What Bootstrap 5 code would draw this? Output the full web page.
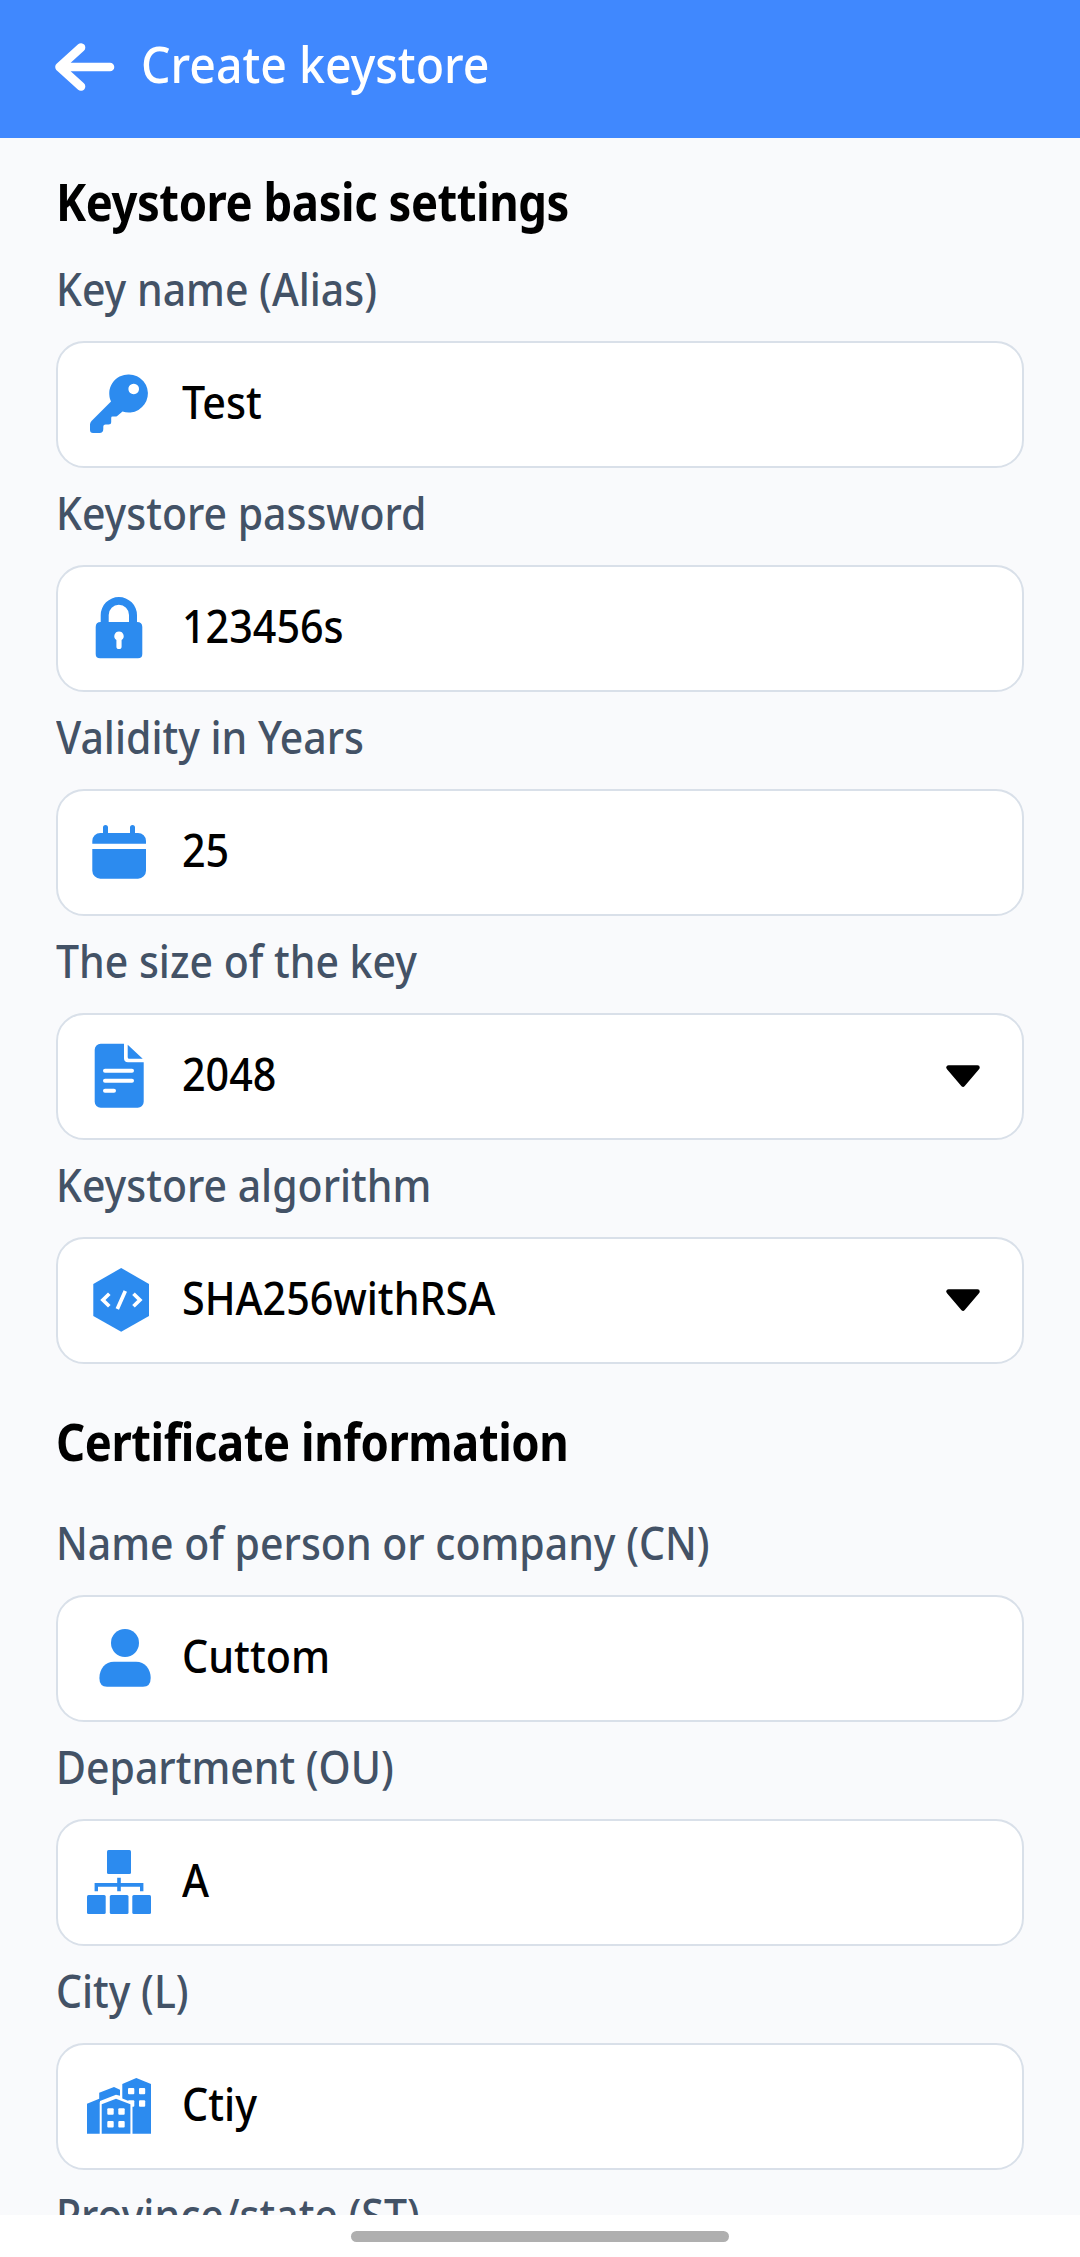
<!DOCTYPE html>
<html lang="en">
<head>
<meta charset="utf-8">
<meta name="viewport" content="width=device-width, initial-scale=1">
<title>Create keystore</title>
<link href="https://cdn.jsdelivr.net/npm/bootstrap@5.3.0/dist/css/bootstrap.min.css" rel="stylesheet">
<style>
body{font-family:"Noto Sans","Open Sans",sans-serif;font-size:45px;font-weight:500;color:#000;background:#f9fafc}
.app-screen{height:2257px}
.app-top{height:137.5px;background:#4088fe;padding-left:54px;color:#fff}
.back-arrow{margin-top:42px}
.app-title{font-size:51px;line-height:126px;margin-left:25px;font-weight:500}
.app-body{padding:0 56px;min-height:0}
.sec-title{font-size:52.5px;font-weight:700;line-height:125px;height:106.5px;margin:0;letter-spacing:-.5px}
.sec-title.second{height:134px;line-height:153px}
.sec-title .sx{transform:scaleX(.865)}
.fld-label{display:block;height:97px;line-height:89px;color:#435266;white-space:nowrap}
.fld-box{height:127px;border:2px solid #d9e0e9;border-radius:28px;background:#fff;padding:0 41px 0 29px}
.fld-box svg.ico{width:64px;height:64px;margin-top:29px;fill:#2c8bef;overflow:visible}
.fld-box svg.caret{width:36px;height:24px;margin-top:49px}
.fld-val{line-height:117px;margin-left:31px;white-space:nowrap}
.sx{display:inline-block;transform:scaleX(.911);transform-origin:0 50%;white-space:nowrap}
.fld-val .sx{transform:scaleX(.917)}
.app-nav{height:42px;background:#fff;padding-top:16px}
.nav-pill-bar{width:378px;height:11px;border-radius:5.5px;background:#afafaf}
</style>
</head>
<body>
<div class="app-screen d-flex flex-column overflow-hidden">
<header class="app-top d-flex flex-shrink-0">
<svg class="back-arrow" width="62" height="50" viewBox="0 0 62 50" fill="none" stroke="#fff" stroke-width="8.6" stroke-linecap="round" stroke-linejoin="round"><path d="M56 25H6M27 5.5L5.5 25L27 44.5"/></svg>
<div class="app-title"><span class="sx">Create keystore</span></div>
</header>
<main class="app-body flex-grow-1 overflow-hidden">
<h1 class="sec-title"><span class="sx">Keystore basic settings</span></h1>
<label class="fld-label"><span class="sx">Key name (Alias)</span></label>
<div class="fld-box d-flex align-items-start">
<svg class="ico" viewBox="0 0 64 64"><path fill-rule="evenodd" d="M42 2.5a19 19 0 1 1-6.500 36.900L30.500 43.700Q29.500 44.600 28 44.600H25.500Q24.200 44.600 24.200 46V50Q24.200 52.500 21.500 52.500H18.500Q16.300 52.500 16.300 54.500V57Q16.300 61 12.500 61H6Q3 61 3 58V52.500Q3 50.500 4.500 49L24 29.500A19 19 0 0 1 42 2.500ZM46.700 11.700a5.300 5.300 0 1 0 .01 0Z"/></svg>
<div class="fld-val"><span class="sx">Test</span></div></div>
<label class="fld-label"><span class="sx">Keystore password</span></label>
<div class="fld-box d-flex align-items-start">
<svg class="ico" viewBox="0 0 64 64"><path fill-rule="evenodd" d="M13.700 26V19.200a18.150 18.150 0 0 1 36.300 0V26Q55.300 26 55.300 31V58Q55.300 62.300 51 62.300H13Q8.700 62.300 8.700 58V31Q8.700 26 13.700 26ZM21.700 26H42V19a10.150 10.150 0 0 0-20.300 0ZM32 35.500a4.700 4.700 0 0 0-2.600 8.600V50.500a2.600 2.600 0 0 0 5.200 0V44.100A4.700 4.700 0 0 0 32 35.500Z"/></svg>
<div class="fld-val"><span class="sx">123456s</span></div></div>
<label class="fld-label"><span class="sx">Validity in Years</span></label>
<div class="fld-box d-flex align-items-start">
<svg class="ico" viewBox="0 0 64 64"><path d="M5.300 23.700V21a8 8 0 0 1 8-8H16V7.500a2.500 2.500 0 0 1 5 0V13H43V7.500a2.500 2.500 0 0 1 5 0V13H51a8 8 0 0 1 8 8V23.700ZM5.300 29H59V50.700a8 8 0 0 1-8 8H13.300a8 8 0 0 1-8-8Z"/></svg>
<div class="fld-val"><span class="sx">25</span></div></div>
<label class="fld-label"><span class="sx">The size of the key</span></label>
<div class="fld-box d-flex align-items-start">
<svg class="ico" viewBox="0 0 64 64"><path d="M14-.3H37V14.300Q37 18.300 41 18.300H56.700V57.700a6 6 0 0 1-6 6H13.700a6 6 0 0 1-6-6V5.700a6 6 0 0 1 6-6ZM40.700.7L55.700 14.700H42.200Q40.700 14.700 40.700 13.200Z"/><path d="M18 26.700H45M18 36.700H45M18 46.700H27" stroke="#fff" stroke-width="4" stroke-linecap="round"/></svg>
<div class="fld-val flex-grow-1"><span class="sx">2048</span></div>
<svg class="caret" viewBox="0 0 36 24"><path d="M3.500 3.500H32.500L18 20.500Z" stroke="#000" stroke-width="4.500" stroke-linejoin="round"/></svg></div>
<label class="fld-label"><span class="sx">Keystore algorithm</span></label>
<div class="fld-box d-flex align-items-start">
<svg class="ico" viewBox="0 0 64 64"><path d="M34.200 0L62 16V48L34.200 63.700L6.300 48V16Z"/><path d="M22.300 25.700L15.900 32L22.300 38.300M46.500 25.700L52.900 32L46.500 38.300M38.300 22.900L30.300 41" fill="none" stroke="#fff" stroke-width="3.700"/></svg>
<div class="fld-val flex-grow-1"><span class="sx">SHA256withRSA</span></div>
<svg class="caret" viewBox="0 0 36 24"><path d="M3.500 3.500H32.500L18 20.500Z" stroke="#000" stroke-width="4.500" stroke-linejoin="round"/></svg></div>
<h2 class="sec-title second"><span class="sx">Certificate information</span></h2>
<label class="fld-label"><span class="sx">Name of person or company (CN)</span></label>
<div class="fld-box d-flex align-items-start">
<svg class="ico" viewBox="0 0 64 64"><circle cx="38" cy="17" r="14"/><path d="M27 35.700H49C58 35.700 63.700 43 63.700 52Q63.700 60.700 56 60.700H20Q12.400 60.700 12.400 52C12.400 43 18 35.700 27 35.700Z"/></svg>
<div class="fld-val"><span class="sx">Cuttom</span></div></div>
<label class="fld-label"><span class="sx">Department (OU)</span></label>
<div class="fld-box d-flex align-items-start">
<svg class="ico" viewBox="0 0 64 64"><rect x="20" width="24" height="24" rx="1.500"/><rect y="45" width="18.700" height="19" rx="1.500"/><rect x="22.800" y="45" width="18.700" height="19" rx="1.500"/><rect x="45.300" y="45" width="18.700" height="19" rx="1.500"/><path d="M30.200 27.700H33.800V33H56.400V41.300H53V36.700H33.800V41.300H30.200V36.700H11V41.300H7.600V33H30.200Z"/></svg>
<div class="fld-val"><span class="sx">A</span></div></div>
<label class="fld-label"><span class="sx">City (L)</span></label>
<div class="fld-box d-flex align-items-start">
<svg class="ico" viewBox="0 0 64 64"><path d="M0 59.700V29.700L12.200 24.700V18.700L27 13L33 15.700V21.700L29 20.700L13 27V59.700Z"/><path d="M35.300 59V10L49.300 4L64 10V59.700H45Z"/><g fill="#fff"><rect x="41" y="14" width="6.300" height="6.300" rx="1"/><rect x="52" y="14" width="6.200" height="6.300" rx="1"/><rect x="41" y="26.300" width="6.300" height="6.400" rx="1"/><rect x="52" y="26.300" width="6.200" height="6.400" rx="1"/><path d="M12.700 60.200V28.300L29 22L45.500 28.500V60.200Z"/></g><path d="M14.700 59.700V30.200L29 24.700L43.400 30.200V59.700Z"/><g fill="#fff"><rect x="20.300" y="34.300" width="6.400" height="6.400" rx="1"/><rect x="31.300" y="34.300" width="6.400" height="6.400" rx="1"/><rect x="20.300" y="47" width="6.400" height="6.400" rx="1"/><rect x="31.300" y="47" width="6.400" height="6.400" rx="1"/></g></svg>
<div class="fld-val"><span class="sx">Ctiy</span></div></div>
<label class="fld-label"><span class="sx">Province/state (ST)</span></label>
</main>
<footer class="app-nav flex-shrink-0 d-flex justify-content-center"><div class="nav-pill-bar"></div></footer>
</div>
<script src="https://cdn.jsdelivr.net/npm/bootstrap@5.3.0/dist/js/bootstrap.bundle.min.js"></script>
</body>
</html>
